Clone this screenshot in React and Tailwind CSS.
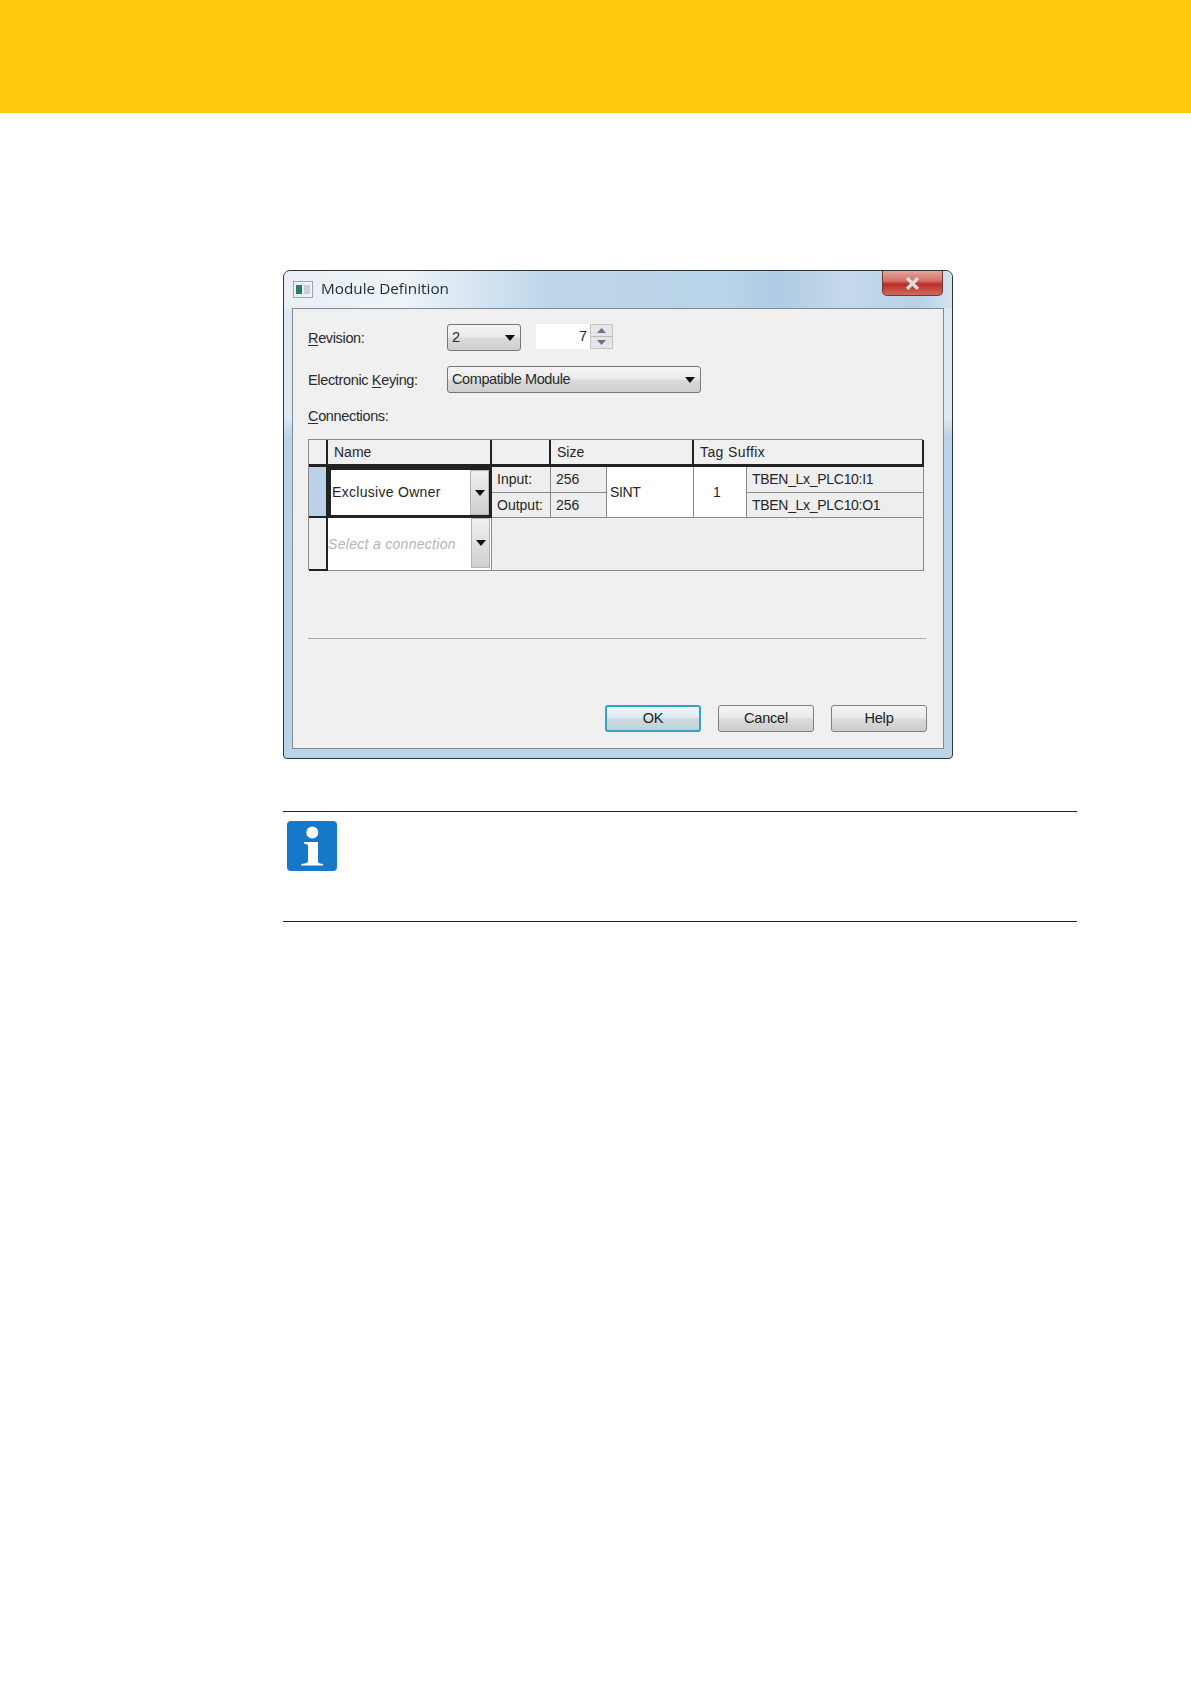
const dialogFont = "font-['Liberation_Sans',Arial,sans-serif]";

const Arrow = ({ className = "" }) => (
  <svg className={className} width="10" height="6" viewBox="0 0 10 6">
    <path d="M0 0h10L5 6z" fill="#111" />
  </svg>
);

const Label = ({ hot, before = "", after }) => (
  <span className="text-[14.5px] text-[#2b2b2b] tracking-[-0.35px]">
    {before}
    <span className="underline underline-offset-2">{hot}</span>
    {after}
  </span>
);

const Combo = ({ value, className }) => (
  <div
    className={`flex h-[27px] items-center justify-between rounded-[3px] border border-[#777] bg-[linear-gradient(#f4f4f4_0%,#ebebeb_45%,#d9d9d9_55%,#cfcfcf_100%)] pl-[4px] pr-[5px] text-[14.5px] text-[#2b2b2b] tracking-[-0.4px] ${className}`}
  >
    <span className="pt-[1px]">{value}</span>
    <Arrow />
  </div>
);

const DialogButton = ({ children, primary }) => (
  <div
    className={`flex h-[27px] w-[96px] items-center justify-center rounded-[3px] border pt-[1px] text-[14.5px] tracking-[-0.2px] text-[#222] ${
      primary
        ? "border-[#3c9fc9] border-2 bg-[linear-gradient(#eef6fa_0%,#dfeaf0_45%,#cbd9e0_55%,#c2d3db_100%)]"
        : "border-[#808080] bg-[linear-gradient(#f4f4f4_0%,#ebebeb_45%,#d9d9d9_55%,#cdcdcd_100%)]"
    }`}
  >
    {children}
  </div>
);

const DropButton = ({ className = "" }) => (
  <div
    className={`flex w-[19px] items-center justify-center self-stretch border border-[#b5b5b5] bg-[linear-gradient(#f0f0f0,#cfcfcf)] ${className}`}
  >
    <Arrow />
  </div>
);

const headCell =
  "flex items-center border-r-2 border-b-[3px] border-r-[#222] border-b-[#222] pl-[6px] bg-[#f0f0f0]";
const grayCell =
  "flex items-center border-r border-b border-[#8a8a8a] pl-[5px] bg-[#eeeeee]";

const ConnectionsTable = () => (
  <div className="mt-[12px] grid h-[131px] w-[615px] grid-cols-[19px_164px_59px_56px_87px_53px_177px] grid-rows-[27px_26px_25px_53px] border-t border-l border-[#8a8a8a] text-[14px] text-[#262626]">
    <div className={headCell}></div>
    <div className={headCell}>Name</div>
    <div className={headCell}></div>
    <div className={`${headCell} col-span-2`}>Size</div>
    <div className={`${headCell} col-span-2 tracking-[0.4px]`}>Tag Suffix</div>

    <div className="row-span-2 border-r-2 border-b-2 border-[#222] bg-[#bdd0ea]"></div>
    <div className="row-span-2 flex items-center border-[3px] border-[#222] bg-white pl-[1px]">
      <span className="flex-1 tracking-[0.3px]">Exclusive Owner</span>
      <DropButton />
    </div>
    <div className={grayCell}>Input:</div>
    <div className={grayCell}>256</div>
    <div className="row-span-2 flex items-center border-r border-b border-[#8a8a8a] bg-white pl-[3px] tracking-[-0.4px]">
      SINT
    </div>
    <div className="row-span-2 flex items-center justify-center border-r border-b border-[#8a8a8a] bg-white pr-[6px]">
      1
    </div>
    <div className={`${grayCell} tracking-[-0.3px]`}>TBEN_Lx_PLC10:I1</div>
    <div className={grayCell}>Output:</div>
    <div className={grayCell}>256</div>
    <div className={`${grayCell} tracking-[-0.3px]`}>TBEN_Lx_PLC10:O1</div>

    <div className="border-r-2 border-b-2 border-[#222] bg-[#f0f0f0]"></div>
    <div className="flex items-center border-r border-b border-[#8a8a8a] bg-white">
      <span className="flex-1 italic tracking-[0.3px] text-[#b4b4b4]">Select a connection</span>
      <DropButton className="mb-[2px] mr-[1px]" />
    </div>
    <div className="col-span-5 border-r border-b border-[#8a8a8a] bg-[#eeeeee]"></div>
  </div>
);

const ModuleDefinition = () => (
  <div
    className={`flex h-[489px] w-[670px] flex-col rounded-t-[7px] rounded-b-[4px] border border-[#2c363e] bg-[linear-gradient(#dde9f2_0%,#dfe9f1_30%,#b9d3e8_34%,#bcd4e8_100%)] px-[8px] pb-[9px] blur-[0.45px] ${dialogFont}`}
  >
    <div className="-mx-[8px] flex h-[37px] rounded-t-[7px] bg-[linear-gradient(90deg,#e9eff4_0%,#eef3f7_18%,#bdd6ea_40%,#b8d2e7_68%,#aecce3_74%,#c5d9ea_84%,#b6d1e7_95%,#d4e3ef_100%)] pl-[9px] pr-[9px]">
      <svg className="mt-[10px]" width="20" height="17" viewBox="0 0 20 17">
        <rect x="0.5" y="0.5" width="19" height="16" fill="#eef0f2" stroke="#9aa5ad" />
        <rect x="3" y="4" width="6" height="9" fill="#2f7d66" />
        <rect x="11" y="4" width="6" height="9" fill="#c9ced3" />
      </svg>
      <span className="ml-[8px] mt-[7px] font-['Open_Sans',sans-serif] text-[15.3px] leading-[21px] text-[#1f2a33]">
        Module Definition
      </span>
      <div className="ml-auto flex h-[25px] w-[61px] items-center justify-center rounded-b-[5px] border border-t-0 border-[#6d3a36] bg-[linear-gradient(#e3a69d_0%,#d4736a_40%,#bb2e26_55%,#cf6a5f_100%)]">
        <svg width="17" height="13" viewBox="0 0 17 13">
          <path d="M3 1l11 11M14 1L3 12" stroke="#dfdcda" strokeWidth="3.4" />
        </svg>
      </div>
    </div>

    <div className="flex flex-1 flex-col border border-[#7d8b96] bg-[#f0f0f0] pl-[15px] pr-[15px] pt-[15px]">
      <div className="flex h-[27px] items-center">
        <div className="w-[139px]">
          <Label hot="R" after="evision:" />
        </div>
        <Combo value="2" className="w-[74px]" />
        <div className="ml-[15px] flex h-[25px] w-[54px] items-center justify-end self-start bg-white pr-[3px] text-[14.5px] text-[#2b2b2b]">
          7
        </div>
        <div className="flex h-[25px] w-[23px] flex-col self-start border border-[#c4c4c4] bg-[#e6e6e6]">
          <div className="flex flex-1 items-center justify-center border-b border-[#bdbdbd]">
            <svg width="9" height="5" viewBox="0 0 9 5">
              <path d="M0 5h9L4.500 0z" fill="#6a6f9a" />
            </svg>
          </div>
          <div className="flex flex-1 items-center justify-center">
            <svg width="9" height="5" viewBox="0 0 9 5">
              <path d="M0 0h9L4.500 5z" fill="#6a6f9a" />
            </svg>
          </div>
        </div>
      </div>

      <div className="mt-[15px] flex h-[27px] items-center">
        <div className="w-[139px]">
          <Label before="Electronic " hot="K" after="eying:" />
        </div>
        <Combo value="Compatible Module" className="w-[254px]" />
      </div>

      <div className="mt-[14px] flex h-[20px] items-center">
        <Label hot="C" after="onnections:" />
      </div>

      <ConnectionsTable />

      <div className="mt-[68px] h-px w-[618px] bg-[#a9a9a9]"></div>

      <div className="mt-[66px] flex w-[619px] justify-end gap-[17px]">
        <DialogButton primary>OK</DialogButton>
        <DialogButton>Cancel</DialogButton>
        <DialogButton>Help</DialogButton>
      </div>
    </div>
  </div>
);

const InfoIcon = () => (
  <svg width="50" height="50" viewBox="0 0 50 50">
    <rect width="50" height="50" rx="4" fill="#1578c8" />
    <circle cx="25.300" cy="11.500" r="6" fill="#fff" />
    <path
      d="M17 21h14v19.500q0 1.500 2 2l3 .5v1.500H14.300V43l3.200-.5q3-.5 3.500-2V25q0-1.500-2-2l-2-.5z"
      fill="#fff"
    />
  </svg>
);

export default function App() {
  return (
    <div className="min-h-[1684px] bg-white">
      <div className="h-[113px] bg-[#fec90d]"></div>
      <div className="pl-[283px] pt-[157px]">
        <ModuleDefinition />
        <div className="mt-[52px] h-[111px] w-[794px] border-y border-[#222] pl-[4px] pt-[9px]">
          <InfoIcon />
        </div>
      </div>
    </div>
  );
}
